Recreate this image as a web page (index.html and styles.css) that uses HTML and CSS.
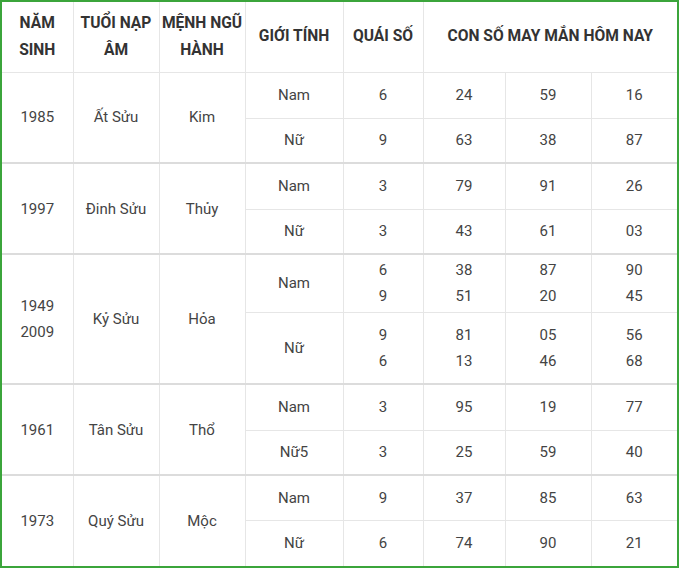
FILE: index.html
```html
<!DOCTYPE html>
<html lang="vi">
<head>
<meta charset="utf-8">
<link rel="stylesheet" href="styles.css">
</head>
<body>
<div class="frame">
<table class="lucky">
<colgroup>
<col class="c1"><col class="c2"><col class="c3"><col class="c4"><col class="c5"><col class="c6"><col class="c7"><col class="c8">
</colgroup>
<thead>
<tr class="h70">
<th>NĂM<br>SINH</th>
<th>TUỔI NẠP<br>ÂM</th>
<th>MỆNH NGŨ<br>HÀNH</th>
<th>GIỚI TÍNH</th>
<th>QUÁI SỐ</th>
<th colspan="3">CON SỐ MAY MẮN HÔM NAY</th>
</tr>
</thead>
<tbody>
<tr class="h46"><td rowspan="2">1985</td><td rowspan="2">Ất Sửu</td><td rowspan="2">Kim</td><td>Nam</td><td>6</td><td>24</td><td>59</td><td>16</td></tr>
<tr class="h45"><td>Nữ</td><td>9</td><td>63</td><td>38</td><td>87</td></tr>
</tbody>
<tbody>
<tr class="h46"><td rowspan="2">1997</td><td rowspan="2">Đinh Sửu</td><td rowspan="2">Thủy</td><td>Nam</td><td>3</td><td>79</td><td>91</td><td>26</td></tr>
<tr class="h45"><td>Nữ</td><td>3</td><td>43</td><td>61</td><td>03</td></tr>
</tbody>
<tbody>
<tr class="h58"><td rowspan="2">1949<br>2009</td><td rowspan="2">Kỷ Sửu</td><td rowspan="2">Hỏa</td><td>Nam</td><td>6<br>9</td><td>38<br>51</td><td>87<br>20</td><td>90<br>45</td></tr>
<tr class="h72"><td>Nữ</td><td>9<br>6</td><td>81<br>13</td><td>05<br>46</td><td>56<br>68</td></tr>
</tbody>
<tbody>
<tr class="h46"><td rowspan="2">1961</td><td rowspan="2">Tân Sửu</td><td rowspan="2">Thổ</td><td>Nam</td><td>3</td><td>95</td><td>19</td><td>77</td></tr>
<tr class="h45"><td>Nữ5</td><td>3</td><td>25</td><td>59</td><td>40</td></tr>
</tbody>
<tbody>
<tr class="h45"><td rowspan="2">1973</td><td rowspan="2">Quý Sửu</td><td rowspan="2">Mộc</td><td>Nam</td><td>9</td><td>37</td><td>85</td><td>63</td></tr>
<tr class="h46"><td>Nữ</td><td>6</td><td>74</td><td>90</td><td>21</td></tr>
</tbody>
</table>
</div>
</body>
</html>
```

FILE: styles.css
```css
html, body {
  margin: 0;
  padding: 0;
  background: #ffffff;
}
.frame {
  width: 675px;
  border: 2px solid #3ba53b;
  background: #ffffff;
}
.lucky {
  width: 675px;
  table-layout: fixed;
  border-collapse: collapse;
  font-family: Roboto, "Noto Sans", Arial, sans-serif;
  font-size: 15px;
  color: #444444;
}
.c1 { width: 71px; }
.c2 { width: 86px; }
.c3 { width: 86px; }
.c4 { width: 98px; }
.c5 { width: 80px; }
.c6 { width: 82px; }
.c7 { width: 86px; }
.c8 { width: 86px; }
.lucky th, .lucky td {
  padding: 0;
  text-align: center;
  vertical-align: middle;
  line-height: 26px;
  border: 1px solid #e6e6e6;
}
.lucky th {
  font-size: 15.6px;
  line-height: 27px;
  font-weight: 700;
  color: #333333;
}
.lucky tr > :first-child { border-left: 0; }
.lucky tr > :last-child { border-right: 0; }
.lucky thead th { border-top: 0; }
.lucky tbody + tbody tr:first-child td { border-top: 2px solid #dcdcdc; }
.lucky tbody:last-child tr:last-child td { border-bottom: 0; }
.lucky tbody:last-child td[rowspan] { border-bottom: 0; }
.h70 { height: 70px; }
.h45 { height: 45px; }
.h46 { height: 46px; }
.h58 { height: 58px; }
.h72 { height: 72px; }
```
